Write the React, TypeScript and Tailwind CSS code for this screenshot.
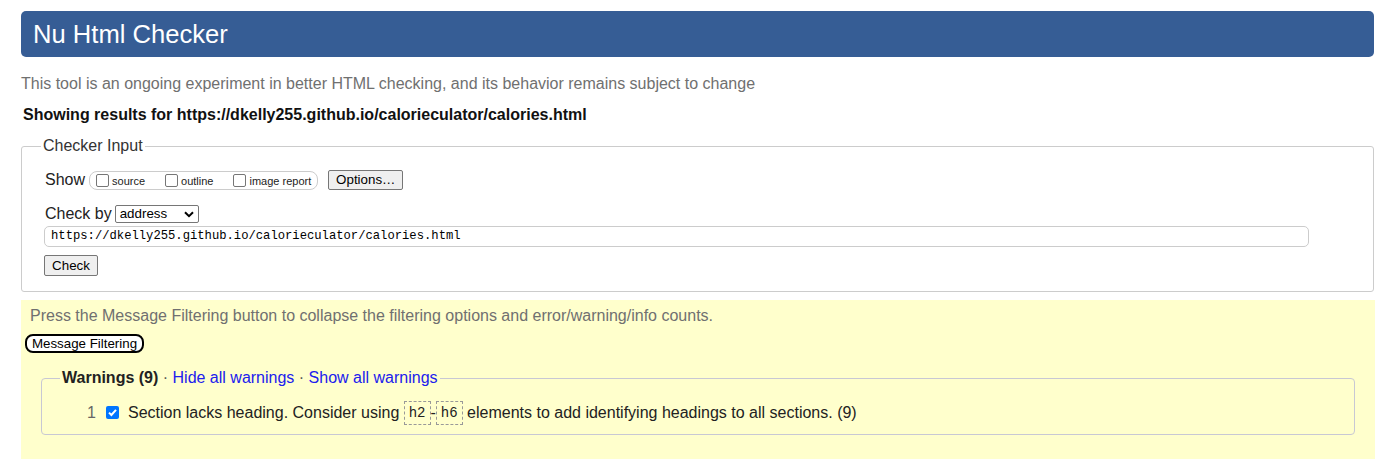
import React from "react";

function Box({ checked = false }: { checked?: boolean }) {
  if (checked) {
    return (
      <span className="inline-flex w-[13px] h-[13px] rounded-[2px] bg-[#0075ff] items-center justify-center shrink-0">
        <svg width="11" height="11" viewBox="0 0 11 11">
          <path d="M2 5.6 L4.4 8 L9 2.8" fill="none" stroke="#fff" strokeWidth="2" />
        </svg>
      </span>
    );
  }
  return <span className="inline-block w-[13px] h-[13px] rounded-[2px] border border-[#767676] bg-white shrink-0" />;
}

export default function App() {
  return (
    <div className="bg-white min-h-[468px] pt-[11px] font-['Liberation_Sans',Arial,sans-serif] text-[#222]">
      <div className="ml-[21px] w-[1354px] flex flex-col">
        <div className="h-[46px] w-[1353px] bg-[#365d95] rounded-[5px] flex items-center pl-[12px] text-white text-[25.6px]">
          Nu Html Checker
        </div>

        <p className="mt-[18px] text-[16px] leading-[18px] text-[#707070]">
          This tool is an ongoing experiment in better HTML checking, and its behavior remains subject to change
        </p>

        <p className="mt-[13px] ml-[2px] text-[16px] leading-[18px] font-bold text-[#111]">
          Showing results for https://dkelly255.github.io/calorieculator/calories.html
        </p>

        <fieldset className="mt-[13px] w-[1353px] border border-[#cccccc] rounded-[3px] pl-[23px] pr-[10px] pt-[15px] pb-[15px]">
          <legend className="-ml-[4px] px-[2px] text-[16px] leading-[18px] text-[#333]">Checker Input</legend>

          <div className="flex items-center h-[20px]">
            <span className="text-[16px] leading-[18px]">Show</span>
            <div className="ml-[4px] h-[19px] border border-[#cccccc] rounded-[8px] flex items-center pl-[6px] pr-[6px] text-[11px] gap-[20px]">
              <span className="flex items-center">
                <Box />
                <span className="ml-[3px] mt-[2px]">source</span>
              </span>
              <span className="flex items-center">
                <Box />
                <span className="ml-[3px] mt-[2px]">outline</span>
              </span>
              <span className="flex items-center">
                <Box />
                <span className="ml-[3px] mt-[2px]">image report</span>
              </span>
            </div>
            <button className="ml-[10px] h-[20px] w-[75px] bg-[#efefef] border border-[#767676] rounded-[2px] text-[13.33px] text-black flex items-center justify-center">
              Options…
            </button>
          </div>

          <div className="mt-[15px] flex items-center h-[18px]">
            <span className="text-[16px] leading-[18px]">Check by</span>
            <div className="ml-[3px] h-[18px] w-[84px] border border-[#767676] rounded-[2px] bg-white flex items-center pl-[4px] pr-[4px] text-[13.33px] text-black">
              <span className="flex-1">address</span>
              <svg width="10" height="7" viewBox="0 0 10 7">
                <path d="M1 1.2 L5 5.2 L9 1.2" fill="none" stroke="#000" strokeWidth="2" />
              </svg>
            </div>
          </div>

          <div className="mt-[3px] h-[21px] w-[1265px] -ml-[1px] border border-[#cccccc] rounded-[5px] flex items-center pl-[6px] font-['Liberation_Mono',monospace] text-[12.2px] text-black">
            https://dkelly255.github.io/calorieculator/calories.html
          </div>

          <button className="mt-[8px] -ml-[1px] h-[21px] w-[54px] bg-[#efefef] border border-[#767676] rounded-[2px] text-[13.33px] text-black flex items-center justify-center">
            Check
          </button>
        </fieldset>

        <div className="mt-[8px] h-[159px] bg-[#ffffcc] pt-[7px] pl-[4px]">
          <p className="ml-[5px] text-[16px] leading-[18px] text-[#707070]">
            Press the Message Filtering button to collapse the filtering options and error/warning/info counts.
          </p>
          <button className="mt-[9px] h-[19px] w-[119px] border-2 border-black rounded-[8px] bg-white text-[13.33px] text-black flex items-center justify-center">
            Message Filtering
          </button>

          <fieldset className="mt-[16px] ml-[16px] w-[1314px] border border-[#c8c8d4] rounded-[4px] pl-[18px] pt-[14px] pb-[9px]">
            <legend className="px-[2px] text-[16px] leading-[18px]">
              <span className="font-bold text-[#222]">Warnings (9)</span>
              <span className="text-[#555]"> · </span>
              <span className="text-[#2020ee]">Hide all warnings</span>
              <span className="text-[#555]"> · </span>
              <span className="text-[#2020ee]">Show all warnings</span>
            </legend>
            <div className="flex items-center h-[24px] text-[16px] leading-[18px]">
              <span className="ml-[27px] w-[9px] text-[#666]">1</span>
              <span className="ml-[10px]">
                <Box checked />
              </span>
              <span className="ml-[9px] flex items-center whitespace-pre">
                <span>Section lacks heading. Consider using </span>
                <span className="h-[24px] border border-dashed border-[#999] px-[4px] flex items-center font-['Liberation_Mono',monospace] text-[14px]">h2</span>
                <span>-</span>
                <span className="h-[24px] border border-dashed border-[#999] px-[4px] flex items-center font-['Liberation_Mono',monospace] text-[14px]">h6</span>
                <span> elements to add identifying headings to all sections. (9)</span>
              </span>
            </div>
          </fieldset>
        </div>
      </div>
    </div>
  );
}
